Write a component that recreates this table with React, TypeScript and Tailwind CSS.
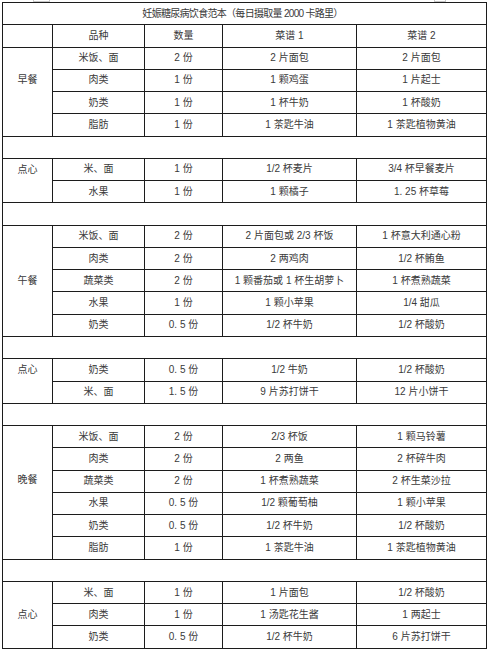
import React from "react";

type Row = [string, string, string, string];

type Group = {
  meal: string;
  // where the meal label sits inside the merged cell
  labelClass: string;
  rows: Row[];
};

const groups: Group[] = [
  {
    meal: "早餐",
    labelClass: "align-middle pb-[24px]",
    rows: [
      ["米饭、面", "2 份", "2 片面包", "2 片面包"],
      ["肉类", "1 份", "1 颗鸡蛋", "1 片起士"],
      ["奶类", "1 份", "1 杯牛奶", "1 杯酸奶"],
      ["脂肪", "1 份", "1 茶匙牛油", "1 茶匙植物黄油"],
    ],
  },
  {
    meal: "点心",
    labelClass: "align-top pt-[5px]",
    rows: [
      ["米、面", "1 份", "1/2 杯麦片", "3/4 杯早餐麦片"],
      ["水果", "1 份", "1 颗橘子", "1. 25 杯草莓"],
    ],
  },
  {
    meal: "午餐",
    labelClass: "align-middle",
    rows: [
      ["米饭、面", "2 份", "2 片面包或 2/3 杯饭", "1 杯意大利通心粉"],
      ["肉类", "2 份", "2 两鸡肉", "1/2 杯鲔鱼"],
      ["蔬菜类", "2 份", "1 颗番茄或 1 杯生胡萝卜", "1 杯煮熟蔬菜"],
      ["水果", "1 份", "1 颗小苹果", "1/4 甜瓜"],
      ["奶类", "0. 5 份", "1/2 杯牛奶", "1/2 杯酸奶"],
    ],
  },
  {
    meal: "点心",
    labelClass: "align-top pt-[5px]",
    rows: [
      ["奶类", "0. 5 份", "1/2 牛奶", "1/2 杯酸奶"],
      ["米、面", "1. 5 份", "9 片苏打饼干", "12 片小饼干"],
    ],
  },
  {
    meal: "晚餐",
    labelClass: "align-middle pb-[24px]",
    rows: [
      ["米饭、面", "2 份", "2/3 杯饭", "1 颗马铃薯"],
      ["肉类", "2 份", "2 两鱼", "2 杯碎牛肉"],
      ["蔬菜类", "2 份", "1 杯煮熟蔬菜", "2 杯生菜沙拉"],
      ["水果", "0. 5 份", "1/2 颗葡萄柚", "1 颗小苹果"],
      ["奶类", "0. 5 份", "1/2 杯牛奶", "1/2 杯酸奶"],
      ["脂肪", "1 份", "1 茶匙牛油", "1 茶匙植物黄油"],
    ],
  },
  {
    meal: "点心",
    labelClass: "align-middle",
    rows: [
      ["米、面", "1 份", "1 片面包", "1/2 杯酸奶"],
      ["肉类", "1 份", "1 汤匙花生酱", "1 两起士"],
      ["奶类", "0. 5 份", "1/2 杯牛奶", "6 片苏打饼干"],
    ],
  },
];

const cell = "border border-[#1c1c1c] p-0 text-center whitespace-nowrap";

export default function App() {
  return (
    <div
      className="relative w-[488px] h-[650px] bg-white pt-[2px] pl-[2px] text-[10px] leading-[12px] text-[#3a3a3a]"
      style={{ fontFamily: "'Liberation Sans', 'Noto Sans CJK SC', sans-serif" }}
    >
      {/* little resize handles peeking over the top edge */}
      <div className="absolute left-[33px] top-[-2px] w-[17px] h-[4px] border border-[#c8c8c8]" />
      <div className="absolute left-[434px] top-[-2px] w-[12px] h-[4px] border border-[#c8c8c8]" />

      <table className="border-collapse table-fixed w-[485px]">
        <colgroup>
          <col className="w-[50px]" />
          <col className="w-[92px]" />
          <col className="w-[78px]" />
          <col className="w-[134px]" />
          <col className="w-[130px]" />
        </colgroup>
        <tbody>
          <tr className="h-[22.27px]">
            <td colSpan={5} className={`${cell} tracking-[-0.7px] pr-[4px]`}>
              妊娠糖尿病饮食范本（每日摄取量 2000 卡路里）
            </td>
          </tr>
          <tr className="h-[22.27px]">
            <td className={cell}></td>
            <td className={cell}>品种</td>
            <td className={cell}>数量</td>
            <td className={cell}>菜谱 1</td>
            <td className={cell}>菜谱 2</td>
          </tr>
          {groups.map((g, gi) => (
            <React.Fragment key={gi}>
              {gi > 0 && (
                <tr className="h-[22.27px]">
                  <td colSpan={5} className={cell}></td>
                </tr>
              )}
              {g.rows.map((r, ri) => (
                <tr key={ri} className="h-[22.27px]">
                  {ri === 0 && (
                    <td rowSpan={g.rows.length} className={`${cell} ${g.labelClass}`}>
                      {g.meal}
                    </td>
                  )}
                  {r.map((t, ti) => (
                    <td key={ti} className={cell}>
                      {t}
                    </td>
                  ))}
                </tr>
              ))}
            </React.Fragment>
          ))}
        </tbody>
      </table>
    </div>
  );
}
